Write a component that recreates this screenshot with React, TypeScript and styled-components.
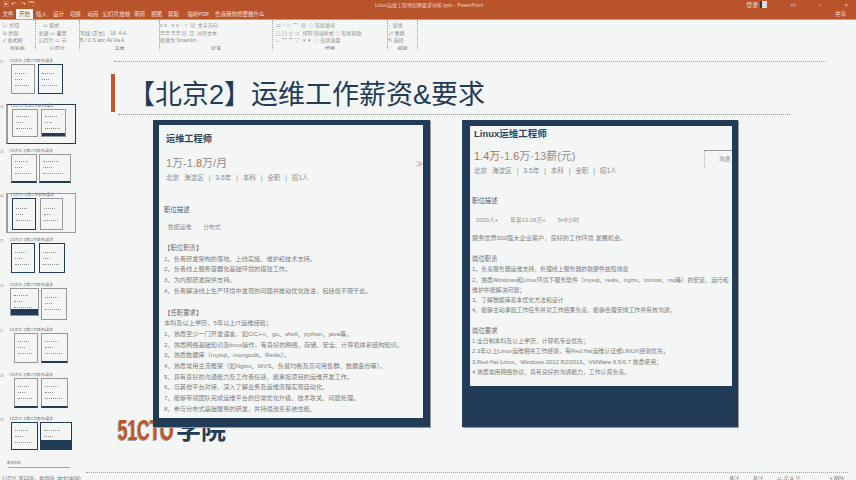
import { FC } from 'react';
import styled, { createGlobalStyle } from 'styled-components';

const NAVY = '#223b57';
const ORANGE = '#b9532b';
const PAPER = '#f4f6f5';

interface ITile {
  width: number;
  height: number;
  navy?: boolean;
  fill?: number;
  thick?: boolean;
}

interface IThumb {
  id: number;
  box?: 'active' | 'plain';
  left: number;
  gap: number;
  tiles: ITile[];
}

const thumbs: IThumb[] = [
  { id: 1, left: 11, gap: 3, tiles: [{ width: 24, height: 30 }, { width: 25, height: 30, navy: true }] },
  { id: 2, box: 'active', left: 11, gap: 3, tiles: [{ width: 26, height: 28 }, { width: 25, height: 28, fill: 3 }] },
  { id: 3, left: 11, gap: 2, tiles: [{ width: 26, height: 29, thick: true }, { width: 32, height: 29, thick: true }] },
  { id: 4, box: 'plain', left: 11, gap: 4, tiles: [{ width: 24, height: 32, navy: true }, { width: 23, height: 32 }] },
  { id: 5, left: 11, gap: 4, tiles: [{ width: 24, height: 30, navy: true }, { width: 26, height: 30, navy: true }] },
  { id: 6, left: 10, gap: 2, tiles: [{ width: 29, height: 28, fill: 6 }, { width: 26, height: 32 }] },
  { id: 7, left: 14, gap: 3, tiles: [{ width: 24, height: 30 }, { width: 27, height: 30, thick: true }] },
  { id: 8, left: 14, gap: 3, tiles: [{ width: 24, height: 30, thick: true }, { width: 27, height: 30, thick: true }] },
  { id: 9, left: 11, gap: 2, tiles: [{ width: 27, height: 28, navy: true }, { width: 32, height: 28, navy: true, fill: 9 }] },
];

const tabs = [
  { label: '文件', width: 16 },
  { label: '开始', width: 17, active: true },
  { label: '插入', width: 17 },
  { label: '设计', width: 17 },
  { label: '切换', width: 17 },
  { label: '动画', width: 18 },
  { label: '幻灯片放映', width: 29 },
  { label: '审阅', width: 17 },
  { label: '视图', width: 17 },
  { label: '帮助', width: 17 },
  { label: '福昕PDF', width: 33 },
  { label: '告诉我你想要做什么', width: 40 },
];

const ribbonGroups = [
  { label: '剪贴板', width: 36, lines: ['  ✂ 剪切', '  ⧉ 复制 ·', '  ✓ 格式刷'] },
  { label: '幻灯片', width: 44, lines: ['     ▭ 版式', '  新建 ▭ 重置', '  幻灯片 ▭ 节'] },
  { label: '字体', width: 80, lines: ['', '等线 (正文)    18  A A', 'B I U S abc AV Aa A'] },
  { label: '段落', width: 113, lines: ['≡ ≡ · ≡ ≡ ·  ↕  ▤  文字方向 ·', '☰ ☰ ☰ ☰ ▤  ▥  对齐文本 ·', '转换为 SmartArt ·'] },
  { label: '绘图', width: 115, lines: ['  ▭ ○ ▷ ⌒  ▤  ◇ 形状填充', '  △ { } ☆ ⇨  排列 快速样式 ◇ 形状轮廓', '  ∟ ⌒ ⌒ ▽  ▾  ▾  ◇ 形状效果'] },
  { label: '编辑', width: 30, lines: ['⌕ 查找', '⇄ 替换 ·', '⇱ 选择 ·'] },
];

const leftDuties = [
  '1、负责研发架构的落地、上线实施、维护和技术支持。',
  '2、负责线上服务容器化基础环境的搭建工作。',
  '3、为内部研发提供支持。',
  '4、负责解决线上生产环境中发现的问题并推动优化改进，包括但不限于此。',
];

const leftRequires = [
  '本科及以上学历，5年以上IT运维经验；',
  '1、熟悉至少一门开发语言，如C/C++、go、shell、python、java等。',
  '2、熟悉网络基础知识及linux操作，有良好的网络、存储、安全、计算机体系结构知识。',
  '3、熟悉数据库（mysql、mongodb、Redis）。',
  '4、熟悉常用主流框架（如Nginx、WVS、负载均衡及高可用集群、数据备份等）。',
  '5、具有良好的沟通能力及工作责任感，能承担项目的运维开发工作。',
  '6、与其他平台对接，深入了解业务及运维流程实现自动化。',
  '7、能够带领团队完成运维平台的日常优化升级、技术攻关、问题处理。',
  '8、参与分布式基础服务的研发，并持续改善系统性能。',
];

const rightDuties = [
  '1、负责服务器运维支持，处理线上服务器的软硬件故障排查',
  '2、熟悉Windows和Linux环境下服务软件（mysql、redis、nginx、tomcat、mq等）的安装、运行和',
  '维护并能解决问题；',
  '3、了解数据库基本优化方法和设计',
  '4、能够主动承担工作任务并对工作结果负责，能够合理安排工作并有效沟通；',
];

const rightRequires = [
  '1.全日制本科及以上学历，计算机专业优先；',
  '2.3年以上Linux运维相关工作经验，有Red Hat运维认证或LINUX经验优先；',
  '3.Red Hat Linux、Windows 2012 R2/2016、VMWare 6.5/6.7 熟悉使用；',
  '4.熟悉常用网络协议，具有良好的沟通能力，工作认真负责。',
];

const GlobalStyle = createGlobalStyle`
  html,
  body {
    margin: 0;
    padding: 0;
    width: 856px;
    height: 480px;
    overflow: hidden;
    background: ${PAPER};
    font-family: 'Liberation Sans', 'Noto Sans CJK SC', sans-serif;
  }
`;

const Thumb: FC<IThumb> = ({ id, box, left, gap, tiles }) => (
  <ThumbRow>
    <ThumbNo>{id + 20}</ThumbNo>
    <ThumbBox $box={box}>
      <ThumbTitle>【北京2】运维工作薪资&amp;要求</ThumbTitle>
      <ThumbTiles $left={left} $gap={gap}>
        {tiles.map((tile, index) => (
          <Tile
            key={index}
            $width={tile.width}
            $height={tile.height}
            $navy={tile.navy}
            $thick={tile.thick}
          >
            <Speck $width={60} />
            <Speck $width={35} />
            <Speck $width={75} />
            {!!tile.fill && <TileFill $height={tile.fill} />}
          </Tile>
        ))}
      </ThumbTiles>
    </ThumbBox>
  </ThumbRow>
);

const App: FC = () => {
  return (
    <Window>
      <GlobalStyle />
      <TitleBar>
        <QuickIcons>▣ ↶ · ↷ 🗔</QuickIcons>
        <DocName>Linux运维工程师招聘要求分析.pptx - PowerPoint</DocName>
        <WinIcons>
          <span>登录</span>
          <AvatarIcon />
          <span>▭</span>
          <span>▫</span>
          <span>×</span>
        </WinIcons>
      </TitleBar>
      <TabBar>
        {tabs.map(tab => (
          <Tab key={tab.label} $width={tab.width} $active={tab.active}>
            {tab.label}
          </Tab>
        ))}
        <ShareLabel>共享</ShareLabel>
      </TabBar>
      <Ribbon>
        {ribbonGroups.map(group => (
          <RibbonGroup key={group.label} $width={group.width}>
            <RibbonBody>
              {group.lines.map((line, index) => (
                <RibbonLine key={index}>{line}</RibbonLine>
              ))}
            </RibbonBody>
            <RibbonLabel>{group.label}</RibbonLabel>
          </RibbonGroup>
        ))}
      </Ribbon>

      <Workspace>
        <Sidebar>
          {thumbs.map(thumb => (
            <Thumb key={thumb.id} {...thumb} />
          ))}
          <LastThumb>
            <ThumbTitle>薪资总结</ThumbTitle>
            <LastRule />
          </LastThumb>
        </Sidebar>
        <SideScroll />

        <Stage>
          <Logo>
            <LogoMark>51CTO</LogoMark>
            <LogoName>学院</LogoName>
          </Logo>
          <TopRule />
          <TitleRow>
            <SlideTitle>【北京2】运维工作薪资&amp;要求</SlideTitle>
          </TitleRow>
          <TitleRule />

          <Cards>
            <Card $top={5} $left={6} $right={7} $bottom={9} $width={277}>
              <Sheet $height={293} $top={8} $left={5}>
                <JobTitle>运维工程师</JobTitle>
                <Salary>
                  1万-1.<Hot>8</Hot>万/月
                </Salary>
                <Meta>北京 海淀区 | 3-5年 | 本科 | 全职 | 招1人</Meta>
                <SectionHead>职位描述</SectionHead>
                <TagRow>
                  <TagText>数据运维</TagText>
                  <TagText>分布式</TagText>
                </TagRow>
                <BlockHead>【职位职责】</BlockHead>
                {leftDuties.map(line => (
                  <BodyLine key={line}>{line}</BodyLine>
                ))}
                <BlockHead>【任职要求】</BlockHead>
                {leftRequires.map(line => (
                  <BodyLine key={line}>{line}</BodyLine>
                ))}
                <MoreArrow>≫</MoreArrow>
              </Sheet>
            </Card>

            <Card $top={6} $left={8} $right={6} $bottom={41} $width={276}>
              <Sheet $height={260} $top={2} $left={2}>
                <JobTitle $tight>Linux运维工程师</JobTitle>
                <Salary $tight>
                  <Hot>1.4万</Hot>-1.<Hot>6</Hot>万·13薪(元)
                </Salary>
                <Meta>北京 海淀区 | 3-5年 | 本科 | 全职 | 招1人</Meta>
                <SectionHead $tight>职位描述</SectionHead>
                <TagRow $tight>
                  <TagText>2000人+</TagText>
                  <TagText>年薪13-26万+</TagText>
                  <TagText>5×8小时</TagText>
                </TagRow>
                <Intro>服务世界500强大企业客户，良好的工作环境 发展机会。</Intro>
                <BlockHead $tight>岗位职责</BlockHead>
                {rightDuties.map(line => (
                  <BodyLine key={line} $tight>{line}</BodyLine>
                ))}
                <BlockHead $tight $spaced>岗位要求</BlockHead>
                {rightRequires.map(line => (
                  <BodyLine key={line} $tight>{line}</BodyLine>
                ))}
                <ContactBox>沟通</ContactBox>
              </Sheet>
            </Card>
          </Cards>
          <StageFoot />
        </Stage>
        <RightScroll />
      </Workspace>

      <StatusBar>
        <span>幻灯片 第22张，共45张  中文(中国)</span>
        <StatusRight>
          <span>备注</span>
          <span>批注</span>
          <span>▭ 品 ⧉ 모</span>
          <span>-</span>
          <span>+ 86%</span>
        </StatusRight>
      </StatusBar>
    </Window>
  );
};

export default App;

const Window = styled.div`
  width: 856px;
  height: 480px;
  display: flex;
  flex-direction: column;
  overflow: hidden;
  background: ${PAPER};
`;

const TitleBar = styled.header`
  height: 9px;
  flex-shrink: 0;
  display: flex;
  align-items: center;
  padding: 0 8px 0 3px;
  background: ${ORANGE};
  color: #e9d3c8;
  font-size: 5px;
`;

const QuickIcons = styled.div`
  width: 372px;
  flex-shrink: 0;
  font-size: 6px;
  white-space: pre;
`;

const DocName = styled.div`
  font-size: 5px;
  white-space: nowrap;
`;

const WinIcons = styled.div`
  display: flex;
  align-items: center;
  gap: 23px;
  margin-left: auto;
  font-size: 6px;
`;

const AvatarIcon = styled.i`
  width: 5px;
  height: 7px;
  margin-left: -21px;
  background: #d8dde2;
  border-left: 2px solid ${NAVY};
`;

const TabBar = styled.nav`
  height: 10px;
  flex-shrink: 0;
  display: flex;
  background: ${ORANGE};
`;

const Tab = styled.div<{ $width: number; $active?: boolean }>`
  width: ${({ $width }) => $width}px;
  height: 10px;
  flex-shrink: 0;
  text-align: center;
  font-size: 5.5px;
  line-height: 10px;
  white-space: nowrap;
  color: ${({ $active }) => ($active ? '#8a5a48' : '#f3e2da')};
  background: ${({ $active }) => ($active ? PAPER : 'transparent')};
`;

const ShareLabel = styled.div`
  margin-left: auto;
  padding-right: 10px;
  font-size: 5.5px;
  line-height: 10px;
  color: #f3e2da;
`;

const Ribbon = styled.section`
  height: 31px;
  flex-shrink: 0;
  display: flex;
  border-top: 1px solid #a8a8a8;
  box-sizing: border-box;
`;

const RibbonGroup = styled.div<{ $width: number }>`
  width: ${({ $width }) => $width}px;
  flex-shrink: 0;
  box-sizing: border-box;
  display: flex;
  flex-direction: column;
  border-right: 1px dotted #a0a0a0;
  overflow: hidden;
`;

const RibbonBody = styled.div`
  flex: 1;
  padding-top: 2px;
`;

const RibbonLine = styled.div`
  height: 7.5px;
  font-size: 5px;
  line-height: 7.5px;
  white-space: pre;
  color: #8c8c8c;
`;

const RibbonLabel = styled.div`
  height: 7px;
  font-size: 5px;
  line-height: 6px;
  text-align: center;
  color: #777;
`;

const Workspace = styled.main`
  flex: 1;
  min-height: 0;
  display: flex;
`;

const Sidebar = styled.aside`
  width: 83px;
  flex-shrink: 0;
  display: flex;
  flex-direction: column;
  padding-top: 9px;
  box-sizing: border-box;
`;

const ThumbRow = styled.div`
  height: 44.8px;
  flex-shrink: 0;
  display: flex;
`;

const ThumbNo = styled.div`
  width: 6px;
  flex-shrink: 0;
  font-size: 3px;
  line-height: 6px;
  overflow: hidden;
  color: #888;
`;

const ThumbBox = styled.div<{ $box?: 'active' | 'plain' }>`
  width: 70px;
  height: 40px;
  box-sizing: border-box;
  border: 1px solid
    ${({ $box }) =>
      $box === 'active' ? NAVY : $box === 'plain' ? '#9b9b9b' : 'transparent'};
  border-left-width: ${({ $box }) => ($box ? 2 : 1)}px;
  border-left-color: ${({ $box }) => ($box ? '#9b9b9b' : 'transparent')};
`;

const ThumbTitle = styled.div`
  height: 3px;
  padding-left: 1px;
  font-size: 3.4px;
  line-height: 3px;
  white-space: nowrap;
  color: #6d7480;
`;

const ThumbTiles = styled.div<{ $left: number; $gap: number }>`
  display: flex;
  align-items: flex-start;
  gap: ${({ $gap }) => $gap}px;
  padding: 1px 0 0 ${({ $left }) => $left - 7}px;
`;

const Tile = styled.div<{
  $width: number;
  $height: number;
  $navy?: boolean;
  $thick?: boolean;
}>`
  position: relative;
  width: ${({ $width }) => $width}px;
  height: ${({ $height }) => $height}px;
  flex-shrink: 0;
  display: flex;
  flex-direction: column;
  justify-content: center;
  gap: 5px;
  padding-left: 3px;
  box-sizing: border-box;
  border: 1px solid ${({ $navy }) => ($navy ? NAVY : '#979797')};
  border-bottom: ${({ $thick }) => ($thick ? 2 : 1)}px solid
    ${({ $navy, $thick }) => ($navy || $thick ? NAVY : '#979797')};
`;

const TileFill = styled.div<{ $height: number }>`
  position: absolute;
  left: 0;
  right: 0;
  bottom: 0;
  height: ${({ $height }) => $height}px;
  background: ${NAVY};
`;

const Speck = styled.div<{ $width: number }>`
  width: ${({ $width }) => $width}%;
  border-top: 1px dotted #8d8d8d;
`;

const LastThumb = styled.div`
  padding: 0 6px;
`;

const LastRule = styled.div`
  width: 62px;
  margin: 2px 0 0 2px;
  border-top: 1px solid #a5a5a5;
`;

const SideScroll = styled.div`
  width: 3px;
  flex-shrink: 0;
  margin-bottom: 8px;
  background-image: radial-gradient(#a6a6a6 0.6px, transparent 0.7px);
  background-size: 2px 2px;
`;

const Stage = styled.div`
  position: relative;
  flex: 1;
  min-width: 0;
  display: flex;
  flex-direction: column;
  padding: 11px 0 0 25px;
  box-sizing: border-box;
`;

const Logo = styled.div`
  position: absolute;
  left: 32px;
  top: 368px;
  display: flex;
  align-items: center;
  height: 24px;
`;

const LogoMark = styled.span`
  width: 57px;
  font-size: 29px;
  font-weight: 700;
  line-height: 24px;
  color: #c2542b;
  text-shadow: -2px 1px 0 #a0a0a0;
  transform: scaleX(0.6);
  transform-origin: left center;
  white-space: nowrap;
`;

const LogoName = styled.span`
  margin-left: 1px;
  font-size: 25px;
  font-weight: 700;
  line-height: 24px;
  color: ${NAVY};
  white-space: nowrap;
`;

const TopRule = styled.div`
  width: 712px;
  margin-left: 3px;
  border-top: 1px dotted #9c9c9c;
`;

const TitleRow = styled.div`
  height: 38px;
  margin-top: 12px;
  display: flex;
  align-items: center;
  border-left: 4px solid #c2562e;
`;

const SlideTitle = styled.h1`
  margin: 0 0 0 13px;
  padding-top: 4px;
  font-size: 27px;
  font-weight: 400;
  line-height: 34px;
  color: ${NAVY};
  white-space: nowrap;
`;

const TitleRule = styled.div`
  width: 672px;
  margin: 2px 0 0 7px;
  border-top: 1px dotted #8c8c8c;
`;

const Cards = styled.div`
  position: relative;
  display: flex;
  gap: 32px;
  margin: 5px 0 0 42px;
`;

const Card = styled.article<{
  $top: number;
  $left: number;
  $right: number;
  $bottom: number;
  $width: number;
}>`
  width: ${({ $width }) => $width}px;
  height: 307px;
  flex-shrink: 0;
  box-sizing: border-box;
  border: solid ${NAVY};
  border-width: ${({ $top, $right, $bottom, $left }) =>
    `${$top}px ${$right}px ${$bottom}px ${$left}px`};
  background: ${NAVY};
  box-shadow: 1px 1px 0 #9a9a9a;
`;

const Sheet = styled.div<{ $height: number; $top: number; $left: number }>`
  position: relative;
  height: ${({ $height }) => $height}px;
  padding: ${({ $top }) => $top}px 4px 0 ${({ $left }) => $left}px;
  box-sizing: border-box;
  background: ${PAPER};
  overflow: hidden;
`;

const JobTitle = styled.div<{ $tight?: boolean }>`
  height: 12px;
  padding-left: 2px;
  font-size: ${({ $tight }) => ($tight ? 9.5 : 9.2)}px;
  font-weight: 700;
  line-height: 12px;
  color: #33465c;
  white-space: nowrap;
`;

const Salary = styled.div<{ $tight?: boolean }>`
  margin-top: ${({ $tight }) => ($tight ? 10 : 12)}px;
  padding-left: 2px;
  font-size: 11px;
  line-height: 13px;
  color: #8d8d8d;
  white-space: nowrap;
`;

const Hot = styled.span`
  color: #bd6a45;
`;

const Meta = styled.div`
  margin-top: 3px;
  padding-left: 2px;
  font-size: 6.6px;
  line-height: 10px;
  word-spacing: 3px;
  color: #8a8a8a;
  white-space: nowrap;
`;

const SectionHead = styled.div<{ $tight?: boolean }>`
  margin-top: ${({ $tight }) => ($tight ? 20 : 22)}px;
  font-size: 6.4px;
  line-height: 10px;
  color: #4e5a68;
  white-space: nowrap;
`;

const TagRow = styled.div<{ $tight?: boolean }>`
  display: flex;
  gap: 12px;
  margin: ${({ $tight }) => ($tight ? '9px 0 0' : '7px 0 1px')};
  padding-left: 4px;
`;

const TagText = styled.span`
  font-size: 5.8px;
  line-height: 10px;
  color: #8f8f8f;
  white-space: nowrap;
`;

const Intro = styled.div`
  margin: 8px 0 2px;
  font-size: 6.2px;
  line-height: 10px;
  color: #808080;
  white-space: nowrap;
`;

const BlockHead = styled.div<{ $tight?: boolean; $spaced?: boolean }>`
  margin-top: ${({ $spaced }) => ($spaced ? 10 : 11)}px;
  font-size: 6.4px;
  line-height: ${({ $tight }) => ($tight ? 10.3 : 10.7)}px;
  color: #6d6d6d;
  white-space: nowrap;
`;

const BodyLine = styled.div<{ $tight?: boolean }>`
  font-size: ${({ $tight }) => ($tight ? 5.9 : 6.2)}px;
  line-height: ${({ $tight }) => ($tight ? 10.3 : 10.7)}px;
  color: #7c7c7c;
  white-space: nowrap;
`;

const MoreArrow = styled.span`
  position: absolute;
  right: 0;
  top: 33px;
  font-size: 7px;
  color: #888;
`;

const ContactBox = styled.div`
  position: absolute;
  right: 0;
  top: 24px;
  width: 28px;
  height: 18px;
  box-sizing: border-box;
  border-top: 1px solid #9a9a9a;
  border-left: 1px dotted #aaa;
  padding: 4px 0 0 14px;
  font-size: 5.5px;
  line-height: 8px;
  color: #8a8a8a;
  white-space: nowrap;
`;

const StageFoot = styled.div`
  width: 762px;
  margin: 45px 0 0 -25px;
  border-top: 1px dotted #a3a3a3;
`;

const RightScroll = styled.div`
  width: 5px;
  flex-shrink: 0;
  margin: 10px 3px 110px 0;
  background-image: radial-gradient(#a6a6a6 0.6px, transparent 0.7px);
  background-size: 2px 2px;
`;

const StatusBar = styled.footer`
  height: 5px;
  flex-shrink: 0;
  display: flex;
  justify-content: space-between;
  padding: 0 4px 0 2px;
  font-size: 5px;
  line-height: 6px;
  color: #777;
  white-space: pre;
  overflow: hidden;
`;

const StatusRight = styled.div`
  display: flex;
  gap: 14px;
  padding-right: 8px;
`;
